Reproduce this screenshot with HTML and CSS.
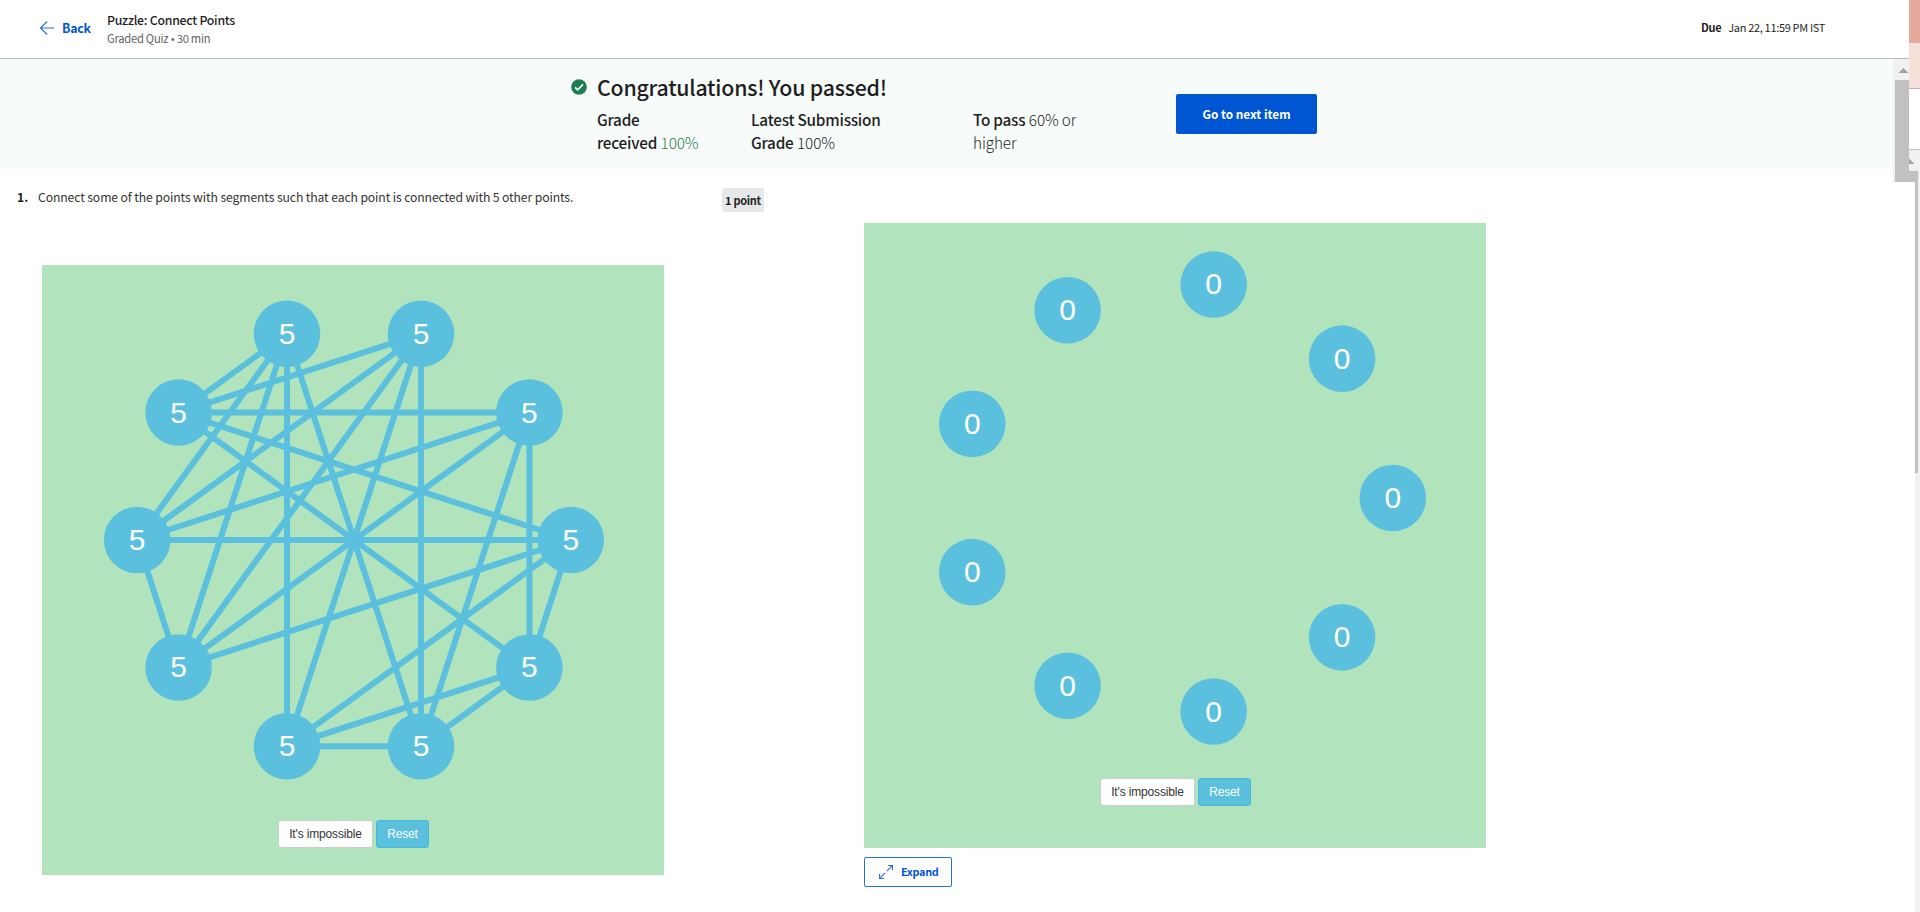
FILE: index.html
```html
<!DOCTYPE html>
<html lang="en">
<head>
<meta charset="utf-8">
<title>Puzzle: Connect Points</title>
<link rel="stylesheet" href="styles.css">
</head>
<body>
<header class="topbar">
  <a class="back"><svg width="16" height="16" viewBox="0 0 16 16"><path d="M15 8H1.5M8 1.500L1.500 8L8 14.500" fill="none" stroke="#2a6fdd" stroke-width="1.200"/></svg><span>Back</span></a>
  <div class="quiz"><div class="quiz-title">Puzzle: Connect Points</div><div class="quiz-sub">Graded Quiz<span class="dot"> • </span>30 min</div></div>
  <div class="due"><b>Due</b><span>Jan 22, 11:59 PM IST</span></div>
</header>
<section class="banner">
  <svg class="check" width="16" height="16" viewBox="0 0 16 16"><circle cx="8" cy="8" r="7.800" fill="#1d7c50"/><path d="M4 8.300L6.700 10.800L12 5.300" fill="none" stroke="#fff" stroke-width="1.700"/></svg>
  <div class="result">
    <h1>Congratulations! You passed!</h1>
    <div class="grades">
      <div class="grade g1"><b>Grade<br>received</b> <span class="green">100%</span></div>
      <div class="grade g2"><b>Latest Submission<br>Grade</b> <span>100%</span></div>
      <div class="grade g3"><b>To pass</b> <span>60% or<br>higher</span></div>
    </div>
  </div>
  <button class="next">Go to next item</button>
</section>
<main class="content">
  <div class="left">
    <div class="question"><b class="num">1.</b><span class="prompt">Connect some of the points with segments such that each point is connected with 5 other points.</span><b class="badge">1 point</b></div>
    <div class="board board-a">
      <svg class="graph" id="graph-a" width="622" height="545"></svg>
      <div class="controls"><button class="btn">It's impossible</button><button class="btn reset">Reset</button></div>
    </div>
  </div>
  <div class="right">
    <div class="board board-b">
      <svg class="graph" id="graph-b" width="622" height="545"></svg>
      <div class="controls"><button class="btn">It's impossible</button><button class="btn reset">Reset</button></div>
    </div>
    <button class="expand"><svg width="16" height="16" viewBox="0 0 16 16"><path d="M10 1.500H14.500V6M14.500 1.500L8.800 7.200M6 14.500H1.500V10M1.500 14.500L7.200 8.800" fill="none" stroke="#2a6fdd" stroke-width="1.100"/></svg><span>Expand</span></button>
  </div>
</main>
<svg class="scrollbars" width="67" height="912" viewBox="1853 0 67 912" shape-rendering="crispEdges">
  <path d="M1893 59h16v123h-16z" fill="#f1f1f1"/>
  <path d="M1895 80h14v91h9v11h-23z" fill="#c1c1c1"/>
  <path d="M1899 73l4.500-5l4.500 5z" fill="#a3a3a3"/>
  <path d="M1909 0h11v43h-11z" fill="#e4aa9b"/>
  <path d="M1909 43h11v45h-11z" fill="#f5e0da"/>
  <path d="M1909 88h11v1h-11z" fill="#bfb2af"/>
  <path d="M1909 89h11v60h-11z" fill="#fff"/>
  <path d="M1909 149h11v1h-11z" fill="#bdbdbd"/>
  <path d="M1909 150h11v21h-11zM1915 171h5v741h-5z" fill="#f1f1f1"/>
  <path d="M1909 159l5 5h-5z" fill="#a3a3a3"/>
  <path d="M1909 171h9v302h-3v-291h-6z" fill="#c1c1c1"/>
</svg>
<script src="graph.js"></script>
</body>
</html>
```

FILE: graph.js
```js
const NS = "http://www.w3.org/2000/svg";

function add(svg, tag, attrs, text) {
  const el = document.createElementNS(NS, tag);
  for (const k in attrs) el.setAttribute(k, attrs[k]);
  if (text !== undefined) el.textContent = text;
  svg.appendChild(el);
}

// Points sit evenly on a circle, counted counter-clockwise from the right.
function draw(id, count, cx, cy, edges) {
  const svg = document.getElementById(id);
  const pts = [];
  for (let i = 0; i < count; i++) {
    const a = (2 * Math.PI * i) / count;
    pts.push([cx + 216.8 * Math.cos(a), cy - 216.8 * Math.sin(a)]);
  }
  const degree = new Array(count).fill(0);
  for (const [a, b] of edges) {
    degree[a]++;
    degree[b]++;
    add(svg, "line", { class: "edge", x1: pts[a][0], y1: pts[a][1], x2: pts[b][0], y2: pts[b][1] });
  }
  pts.forEach(([x, y], i) => {
    add(svg, "circle", { class: "node", cx: x, cy: y, r: 33.3 });
    add(svg, "text", { class: "label", x: x, y: y + 10 }, degree[i]);
  });
}

draw("graph-a", 10, 312, 275, [
  [3, 4], [3, 5], [3, 6], [3, 7], [3, 8],
  [2, 4], [2, 5], [2, 6], [2, 7], [2, 8],
  [1, 4], [1, 5], [1, 6], [1, 8], [1, 9],
  [0, 4], [0, 5], [0, 6], [0, 7], [0, 9],
  [4, 9], [5, 6], [7, 8], [7, 9], [8, 9]
]);
draw("graph-b", 9, 312, 275, []);
```

FILE: styles.css
```css
* { box-sizing: border-box; }
body { margin: 0; width: 1920px; height: 912px; overflow: hidden; background: #fff; color: #1f1f1f; font-family: "Noto Sans CJK SC", "Noto Sans", sans-serif; }
button { font-family: inherit; padding: 0; margin: 0; }
.topbar { display: flex; height: 59px; border-bottom: 1px solid #bdbdbd; padding-left: 39px; white-space: nowrap; }
.back { display: flex; align-items: center; gap: 7px; width: 68px; height: 55px; color: #0056d2; font-size: 12.300px; letter-spacing: -0.200px; font-weight: 700; }
.quiz { padding: 11px 0 0; width: 1594px; }
.quiz-title { font-size: 12.300px; letter-spacing: -0.250px; line-height: 18px; font-weight: 500; }
.quiz-sub { font-size: 11.200px; letter-spacing: -0.250px; line-height: 18px; color: #636363; }
.dot { font-family: "Liberation Sans", Arial, sans-serif; font-size: 10px; }
.due { display: flex; gap: 7px; font-size: 11px; letter-spacing: -0.330px; line-height: 55px; }
.banner { display: flex; width: 1893px; height: 110px; background: #f7fbfa; padding-left: 571px; white-space: nowrap; }
.check { margin-top: 20px; }
.result { padding: 12px 0 0 10px; width: 589px; }
h1 { margin: 0; font-size: 21.300px; letter-spacing: -0.220px; line-height: 32px; font-weight: 500; }
.grades { display: flex; padding-top: 5px; font-size: 15.300px; line-height: 23px; }
.grades b { font-weight: 500; letter-spacing: -0.220px; }
.grade span { font-weight: 300; letter-spacing: -0.100px; }
.g1 { width: 154px; }
.g2 { width: 222px; }
.grade .green { color: #1d7c50; }
.next { width: 141px; height: 40px; margin-top: 35px; padding-bottom: 2px; border: 0; border-radius: 2px; background: #0056d2; color: #fff; font-size: 11.800px; font-weight: 700; }
.content { display: flex; width: 1893px; height: 743px; }
.left { width: 864px; }
.question { display: flex; height: 96px; padding: 19px 0 0 17px; white-space: nowrap; font-size: 12.200px; line-height: 19px; }
.num { width: 21px; }
.prompt { width: 684px; color: #333; letter-spacing: -0.115px; }
.badge { width: 42px; height: 24px; background: #e5e7e8; border-radius: 3px; font-size: 11px; letter-spacing: -0.300px; line-height: 24px; text-align: center; }
.board { width: 622px; background: #b1e4bd; }
.board-a { height: 610px; margin-left: 42px; }
.board-b { height: 625px; }
.right { padding-top: 54px; }
.graph { display: block; }
.edge { stroke: #5bc0de; stroke-width: 6; }
.node { fill: #5bc0de; }
.label { fill: #fff; font: 30px "Liberation Sans", Arial, sans-serif; text-anchor: middle; }
.controls { display: flex; justify-content: center; gap: 3px; padding: 10px 0 0 1px; }
.btn { width: 95px; height: 28px; border: 1px solid #ccc; border-radius: 3px; background: #fff; color: #333; font: 12px "Liberation Sans", Arial, sans-serif; letter-spacing: -0.150px; }
.reset { width: 53px; border-color: #46b8da; background: #5bc0de; color: #fff; }
.expand { display: flex; align-items: center; gap: 7px; width: 88px; height: 30px; margin-top: 9px; padding-left: 13px; border: 1px solid #2a6fdd; border-radius: 2px; background: #fff; color: #0056d2; font-size: 10.800px; letter-spacing: -0.300px; font-weight: 700; }
.expand span { padding-bottom: 2px; }
/* overlapping scrollbars of the window and the page behind it */
.scrollbars { position: absolute; left: 1853px; top: 0; }
```
